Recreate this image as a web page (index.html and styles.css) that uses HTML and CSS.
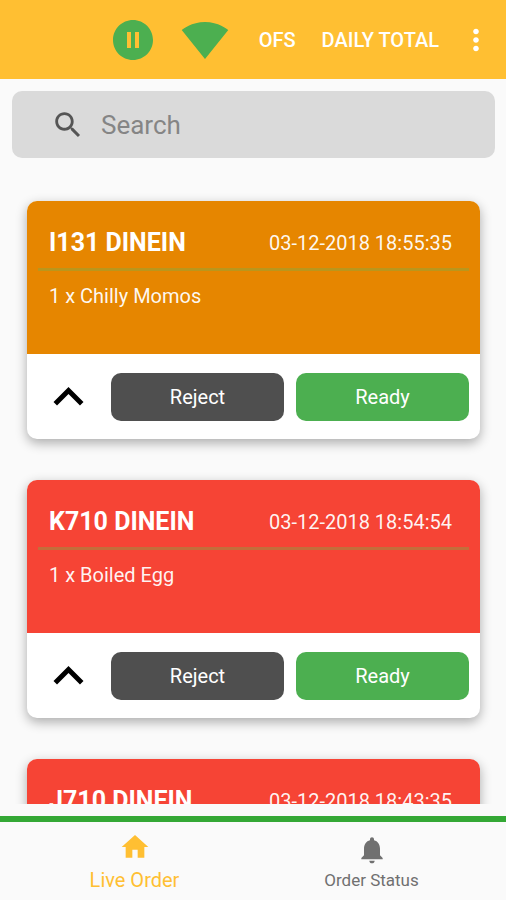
FILE: index.html
```html
<!DOCTYPE html>
<html lang="en">

<head>
    <meta charset="UTF-8">
    <meta name="viewport" content="width=device-width, initial-scale=1.0">
    <title>Live Order</title>
    <link rel="stylesheet" href="styles.css">
</head>

<body>
    <header class="topbar">
        <button class="icon-btn" type="button" aria-label="Pause">
            <svg class="icon-pause" viewBox="0 0 24 24">
                <path d="M12 2C6.48 2 2 6.48 2 12s4.48 10 10 10 10-4.48 10-10S17.52 2 12 2zm-1 14H9V8h2v8zm4 0h-2V8h2v8z" />
            </svg>
        </button>
        <button class="icon-btn" type="button" aria-label="Connection">
            <svg class="icon-wifi" viewBox="0 0 24 24">
                <path d="M12.01 21.49L23.64 7c-.45-.34-4.93-4-11.64-4C5.28 3 .81 6.66.36 7l11.63 14.49.01.01.01-.01z" />
            </svg>
        </button>
        <div class="menu">
            <button class="menu-btn" type="button">OFS</button>
            <button class="menu-btn" type="button">DAILY TOTAL</button>
        </div>
        <button class="icon-btn" type="button" aria-label="More">
            <svg class="icon-more" viewBox="3 0 18 24">
                <path d="M12 8c1.1 0 2-.9 2-2s-.9-2-2-2-2 .9-2 2 .9 2 2 2zm0 2c-1.1 0-2 .9-2 2s.9 2 2 2 2-.9 2-2-.9-2-2-2zm0 6c-1.1 0-2 .9-2 2s.9 2 2 2 2-.9 2-2-.9-2-2-2z" />
            </svg>
        </button>
    </header>

    <label class="search">
        <svg class="icon-search" viewBox="0 0 24 24">
            <path d="M15.5 14h-.79l-.28-.27C15.41 12.59 16 11.11 16 9.5 16 5.91 13.09 3 9.5 3S3 5.91 3 9.5 5.91 16 9.5 16c1.61 0 3.09-.59 4.23-1.57l.27.28v.79l5 4.99L20.49 19l-4.99-5zm-6 0C7.01 14 5 11.99 5 9.5S7.01 5 9.5 5 14 7.01 14 9.5 11.99 14 9.5 14z" />
        </svg>
        <input type="text" placeholder="Search" aria-label="Search">
    </label>

    <main class="orders">
        <article class="card">
            <div class="card-head orange">
                <div class="card-title">
                    <h2>I131 DINEIN</h2>
                    <time>03-12-2018 18:55:35</time>
                </div>
                <p>1 x Chilly Momos</p>
            </div>
            <div class="card-foot">
                <button class="toggle" type="button" aria-label="Collapse">
                    <svg viewBox="0 2.4 24 19.2">
                        <path d="M7.41 15.41L12 10.83l4.59 4.58L18 14l-6-6-6 6z" />
                    </svg>
                </button>
                <button class="btn reject" type="button">Reject</button>
                <button class="btn ready" type="button">Ready</button>
            </div>
        </article>

        <article class="card">
            <div class="card-head red">
                <div class="card-title">
                    <h2>K710 DINEIN</h2>
                    <time>03-12-2018 18:54:54</time>
                </div>
                <p>1 x Boiled Egg</p>
            </div>
            <div class="card-foot">
                <button class="toggle" type="button" aria-label="Collapse">
                    <svg viewBox="0 2.4 24 19.2">
                        <path d="M7.41 15.41L12 10.83l4.59 4.58L18 14l-6-6-6 6z" />
                    </svg>
                </button>
                <button class="btn reject" type="button">Reject</button>
                <button class="btn ready" type="button">Ready</button>
            </div>
        </article>

        <article class="card">
            <div class="card-head red">
                <div class="card-title">
                    <h2>J710 DINEIN</h2>
                    <time>03-12-2018 18:43:35</time>
                </div>
            </div>
        </article>
    </main>

    <nav class="tabs">
        <a class="tab active" href="#">
            <svg viewBox="0 0 24 24">
                <path d="M10 20v-6h4v6h5v-8h3L12 3 2 12h3v8z" />
            </svg>
            <span>Live Order</span>
        </a>
        <a class="tab" href="#">
            <svg viewBox="0 0 24 24">
                <path d="M12 22c1.1 0 2-.9 2-2h-4c0 1.1.89 2 2 2zm6-6v-5c0-3.07-1.64-5.64-4.5-6.32V4c0-.83-.67-1.5-1.5-1.5s-1.5.67-1.5 1.5v.68C7.63 5.36 6 7.92 6 11v5l-2 2v1h16v-1l-2-2z" />
            </svg>
            <span>Order Status</span>
        </a>
    </nav>
</body>

</html>
```

FILE: styles.css
```css
* {
    margin: 0;
    padding: 0;
    box-sizing: border-box;
}

body {
    display: flex;
    flex-direction: column;
    height: 100vh;
    background: #fafafa;
    font-family: Roboto, sans-serif;
    font-size: 20px;
}

button {
    border: none;
    background: none;
    font-family: inherit;
    font-size: 20px;
    cursor: pointer;
}

svg {
    display: block;
}

/* top bar */
.topbar {
    display: flex;
    flex: none;
    align-items: center;
    justify-content: flex-end;
    gap: 24px;
    height: 79px;
    padding-right: 17px;
    background: #ffbf32;
}

.icon-pause,
.icon-wifi {
    width: 48px;
    height: 48px;
    fill: #4caf50;
}

.icon-more {
    width: 26px;
    height: 34px;
    fill: #fff;
}

.menu {
    display: flex;
    gap: 26px;
    padding-left: 6px;
}

.menu-btn {
    color: #fff;
    font-weight: 500;
    line-height: 26px;
    white-space: nowrap;
}

/* search */
.search {
    display: flex;
    flex: none;
    align-items: center;
    gap: 16px;
    height: 67px;
    margin: 12px 11px 0 12px;
    padding: 0 39px;
    border-radius: 10px;
    background: #dadada;
}

.icon-search {
    flex: none;
    width: 34px;
    height: 34px;
    fill: #555;
}

.search input {
    flex: 1;
    min-width: 0;
    border: none;
    outline: none;
    background: none;
    color: #333;
    font-family: inherit;
    font-size: 26px;
}

.search input::placeholder {
    color: #858585;
}

/* orders */
.orders {
    flex: 1;
    min-height: 0;
    margin-bottom: 12px;
    padding: 43px 26px 0 27px;
    overflow: hidden;
}

.card {
    margin-bottom: 41px;
    border-radius: 10px;
    background: #fff;
    box-shadow: 0 4px 12px rgba(0, 0, 0, 0.32);
}

.card-head {
    min-height: 153px;
    padding: 16px 11px 0;
    border-radius: 10px 10px 0 0;
    color: #fff;
}

.orange {
    background: #e68600;
}

.red {
    background: #f64435;
}

.card-title {
    display: flex;
    align-items: center;
    justify-content: space-between;
    height: 54px;
    padding: 0 17px 0 11px;
    border-bottom: 3px solid rgba(120, 175, 70, 0.4);
}

.card-title h2 {
    font-size: 25px;
    font-weight: 700;
}

.card-head p {
    padding: 10px 11px;
    line-height: 30px;
}

.card-head time,
.card-head p {
    color: rgba(255, 255, 255, 0.94);
}

.card-foot {
    display: flex;
    gap: 12px;
    padding: 19px 11px 18px;
}

.toggle svg {
    width: 61px;
    height: 48px;
}

.btn {
    flex: 1;
    height: 48px;
    border-radius: 10px;
    color: #fff;
}

.reject {
    background: #4f4f4f;
}

.ready {
    background: #4caf50;
}

/* bottom tabs */
.tabs {
    display: flex;
    flex: none;
    height: 84px;
    padding: 0 16px;
    border-top: 6px solid #34a835;
}

.tab {
    display: flex;
    flex: 1;
    flex-direction: column;
    align-items: center;
    justify-content: flex-end;
    padding-bottom: 8px;
    color: #707070;
    font-size: 17px;
    line-height: 24px;
    text-decoration: none;
}

.tab svg {
    width: 32px;
    height: 32px;
    margin-bottom: 2px;
    fill: currentColor;
}

.tab.active {
    color: #ffbf32;
    font-size: 20px;
}

.tab.active svg {
    margin-bottom: 5px;
}
```
